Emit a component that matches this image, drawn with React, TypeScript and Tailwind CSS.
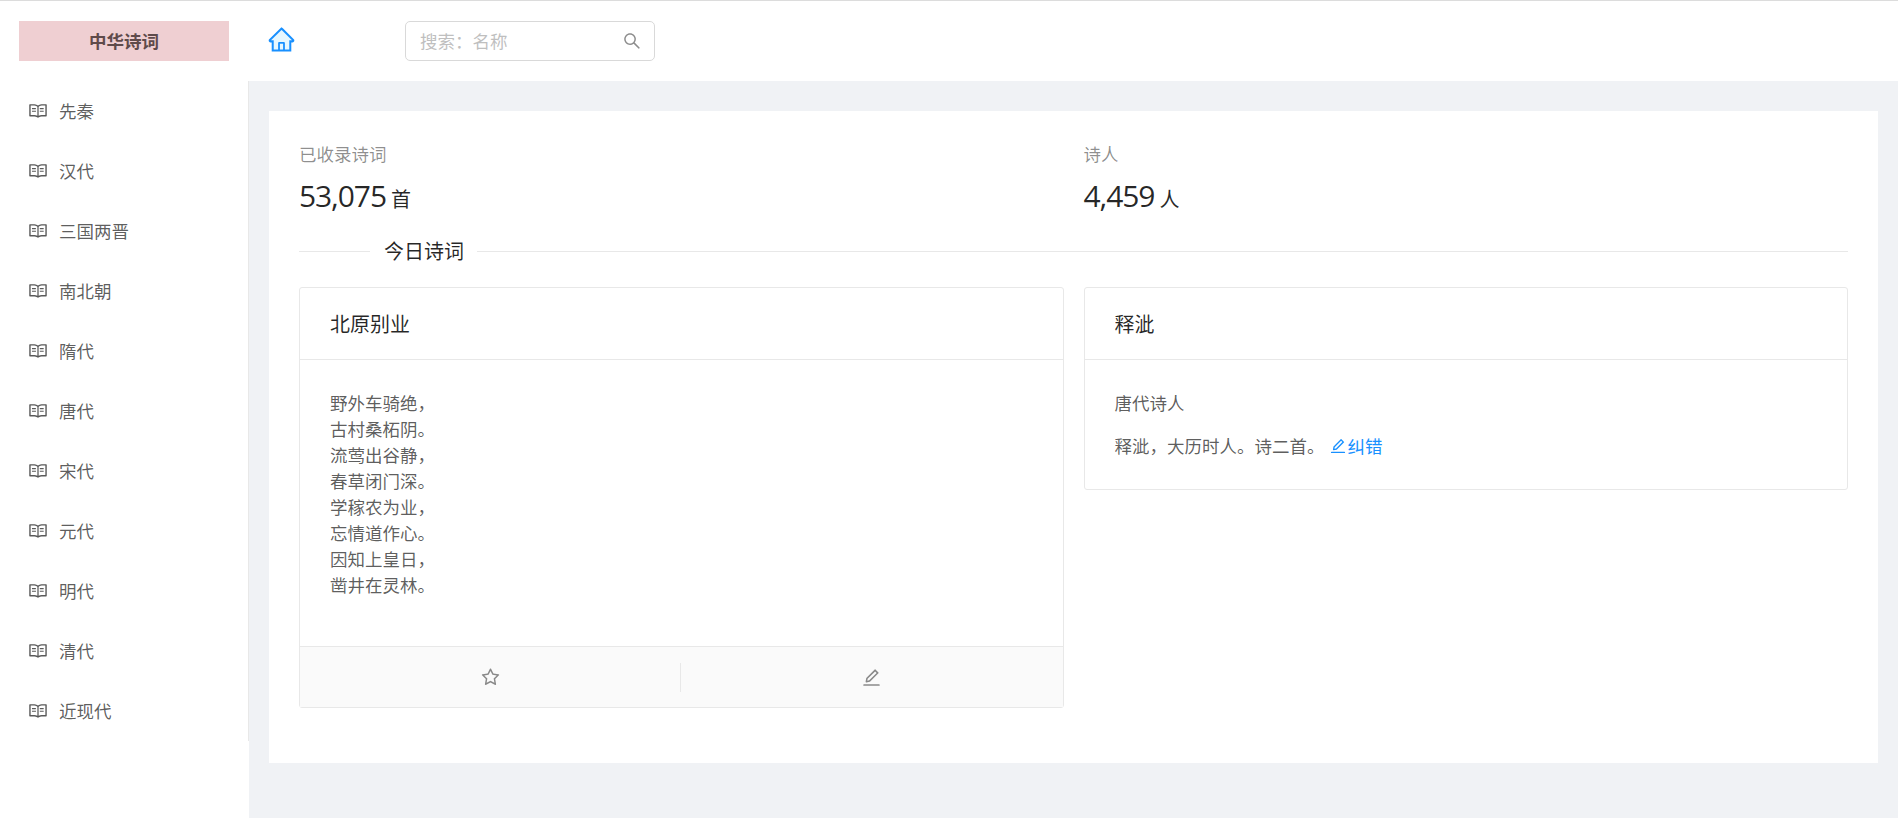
const READ = "M928 161H699.2c-49.1 0-97.1 14.1-138.4 40.7L512 233l-48.8-31.3A255.2 255.2 0 00324.8 161H96c-17.7 0-32 14.3-32 32v568c0 17.7 14.3 32 32 32h228.8c49.1 0 97.1 14.1 138.4 40.7l44.4 28.6c1.3.8 2.8 1.3 4.3 1.3s3-.4 4.3-1.3l44.4-28.6C602 807.1 650.1 793 699.2 793H928c17.7 0 32-14.3 32-32V193c0-17.7-14.3-32-32-32zM324.8 721H136V233h188.8c35.4 0 69.8 10.1 99.5 29.2l48.8 31.3 6.9 4.5v462c-47.6-25.6-100.8-39-155.2-39zm563.2 0H699.2c-54.4 0-107.6 13.4-155.2 39V298l6.9-4.5 48.8-31.3c29.7-19.1 64.1-29.2 99.5-29.2H888v488zM396.9 361H211.1c-3.9 0-7.1 3.4-7.1 7.5v45c0 4.1 3.2 7.5 7.1 7.5h185.7c3.9 0 7.1-3.4 7.1-7.5v-45c.1-4.1-3.1-7.5-7-7.5zm4 135H211.1c-3.9 0-7.1 3.4-7.1 7.5v45c0 4.1 3.2 7.5 7.1 7.5h189.7c3.9 0 7.1-3.4 7.1-7.5v-45c.1-4.1-3.1-7.5-7-7.5zM604 368.5v45c0 4.1 3.2 7.5 7.1 7.5h185.7c3.9 0 7.1-3.4 7.1-7.5v-45c.1-4.1-3.1-7.5-7-7.5H611.1c-3.9 0-7.1 3.4-7.1 7.5zm0 135v45c0 4.1 3.2 7.5 7.1 7.5h185.7c3.9 0 7.1-3.4 7.1-7.5v-45c.1-4.1-3.1-7.5-7-7.5H611.1c-3.9 0-7.1 3.4-7.1 7.5z";
const EDIT = "M257.7 752c2 0 4-.2 6-.5L431.9 722c2-.4 3.9-1.3 5.3-2.8l423.9-423.9a9.96 9.96 0 000-14.1L694.9 114.9c-1.9-1.9-4.4-2.9-7.1-2.9s-5.2 1-7.1 2.9L256.8 538.8c-1.5 1.5-2.4 3.3-2.8 5.3l-29.5 168.2a33.5 33.5 0 009.4 29.8c6.6 6.4 14.9 9.9 23.8 9.9zm67.4-174.4L687.8 215l73.3 73.3-362.7 362.6-88.9 15.7 15.6-89zM880 836H144c-17.7 0-32 14.3-32 32v36c0 4.4 3.6 8 8 8h784c4.4 0 8-3.6 8-8v-36c0-17.7-14.3-32-32-32z";
const STAR = "M908.1 353.1l-253.9-36.9L540.7 86.1c-3.1-6.3-8.2-11.4-14.5-14.5-15.8-7.8-35-1.3-42.9 14.5L369.8 316.2l-253.9 36.9c-7 1-13.4 4.3-18.3 9.3a32.05 32.05 0 00.6 45.3l183.7 179.1-43.4 252.9a31.95 31.95 0 0046.4 33.7L512 754l227.1 119.4c6.2 3.3 13.4 4.4 20.3 3.2 17.4-3 29.1-19.5 26.1-36.9l-43.4-252.9 183.7-179.1c5-4.9 8.3-11.3 9.3-18.3 2.7-17.5-9.5-33.7-27-36.3zM664.8 561.6l36.1 210.3L512 672.7 323.1 772l36.1-210.3-152.8-149L417.6 382 512 190.7 606.4 382l211.2 30.7-152.8 148.9z";
const SEARCH = "M909.6 854.5L649.9 594.8C690.2 542.7 712 479 712 412c0-80.2-31.3-155.4-87.9-212.1-56.6-56.7-132-87.9-212.1-87.9s-155.5 31.3-212.1 87.9C143.2 256.5 112 331.8 112 412c0 80.1 31.3 155.5 87.9 212.1C256.5 680.8 331.8 712 412 712c67 0 130.6-21.8 182.7-62l259.7 259.6a8.2 8.2 0 0011.6 0l43.6-43.5a8.2 8.2 0 000-11.6zM570.4 570.4C528 612.7 471.8 636 412 636s-116-23.3-158.4-65.6C211.3 528 188 471.8 188 412s23.3-116.1 65.6-158.4C296 211.3 352.2 188 412 188s116.1 23.2 158.4 65.6S636 352.2 636 412s-23.3 116.1-65.6 158.4z";
const HOME = "M946.5 505L560.1 118.8l-25.9-25.9a31.5 31.5 0 00-44.4 0L77.5 505a63.9 63.9 0 00-18.8 46c.4 35.2 29.7 63.3 64.9 63.3h42.5V940h691.8V614.3h43.4c17.1 0 33.2-6.7 45.3-18.8a63.6 63.6 0 0018.7-45.3c0-17-6.7-33.1-18.8-45.2zM568 868H456V664h112v204zm217.9-325.7V868H632V640c0-22.1-17.9-40-40-40H432c-22.1 0-40 17.9-40 40v228H238.1V542.3h-96l370-369.7 23.1 23.1L882 542.3h-96.1z";
const HOME_FILL = "M512.1 172.6l-370 369.7h96V868H392V640c0-22.1 17.9-40 40-40h160c22.1 0 40 17.9 40 40v228h153.9V542.3H882L535.2 195.7l-23.1-23.1zM456 664h112v204H456z";

const DYNASTIES = ["先秦", "汉代", "三国两晋", "南北朝", "隋代", "唐代", "宋代", "元代", "明代", "清代", "近现代"];
const POEM = ["野外车骑绝，", "古村桑柘阴。", "流莺出谷静，", "春草闭门深。", "学稼农为业，", "忘情道作心。", "因知上皇日，", "凿井在灵林。"];

function Icon({ d, className }: { d: string; className: string }) {
  return (
    <svg viewBox="0 0 1024 1024" fill="currentColor" className={className}>
      <path d={d} />
    </svg>
  );
}

function Stat({ label, value, unit }: { label: string; value: string; unit: string }) {
  return (
    <div>
      <div className="h-[26px] leading-[26px] text-black/45">{label}</div>
      <div className="mt-[9px] h-[40px] leading-[40px] text-black/85">
        <span className="text-[30px] tracking-[-1.1px] font-['Open_Sans',sans-serif]">{value}</span>
        <span className="ml-[5px] text-[20px]">{unit}</span>
      </div>
    </div>
  );
}

function Sidebar() {
  return (
    <aside className="w-[249px] shrink-0 bg-white">
      <div className="h-[80px] pt-[20px] pl-[19px]">
        <div className="w-[210px] h-[40px] bg-[#efcfd2] flex items-center justify-center font-bold text-[#5f4b4b]">
          中华诗词
        </div>
      </div>
      {/* 菜单 */}
      <nav className="border-r border-[#e8e8e8]">
        {DYNASTIES.map((name) => (
          <div key={name} className="h-[60px] flex items-center pl-[28px] text-black/65">
            <Icon d={READ} className="w-[20px] h-[20px] mr-[11px]" />
            {name}
          </div>
        ))}
      </nav>
    </aside>
  );
}

function Header() {
  return (
    <header className="h-[80px] bg-white flex items-start">
      <svg viewBox="0 0 1024 1024" className="ml-[18px] mt-[24px] w-[29px] h-[29px] text-[#1890ff]">
        <path d={HOME_FILL} fill="#e6f7ff" />
        <path d={HOME} fill="currentColor" />
      </svg>
      <div className="ml-[109px] mt-[20px] w-[250px] h-[40px] border border-[#d9d9d9] rounded-[5px] flex items-center justify-between pl-[14px] pr-[12px]">
        <span className="text-[#bfbfbf]">搜索：名称</span>
        <Icon d={SEARCH} className="w-[20px] h-[20px] text-black/45" />
      </div>
    </header>
  );
}

function PoemCard() {
  return (
    <div className="border border-[#e8e8e8] rounded-[3px] h-[421px] flex flex-col">
      <div className="h-[72px] shrink-0 border-b border-[#e8e8e8] pl-[30px] flex items-center text-[20px] text-black/85">
        北原别业
      </div>
      <div className="flex-1 pt-[30px] pl-[30px] text-black/65 leading-[26px]">
        {POEM.map((line) => (
          <div key={line}>{line}</div>
        ))}
      </div>
      <div className="h-[61px] shrink-0 border-t border-[#e8e8e8] bg-[#fafafa] flex items-center text-black/45">
        <div className="w-[381px] h-[29px] border-r border-[#e8e8e8] flex items-center justify-center">
          <Icon d={STAR} className="w-[21px] h-[21px]" />
        </div>
        <div className="flex-1 h-[29px] flex items-center justify-center">
          <Icon d={EDIT} className="w-[21px] h-[21px]" />
        </div>
      </div>
    </div>
  );
}

function PoetCard() {
  return (
    <div className="border border-[#e8e8e8] rounded-[3px] h-[203px]">
      <div className="h-[72px] border-b border-[#e8e8e8] pl-[30px] flex items-center text-[20px] text-black/85">
        释泚
      </div>
      <div className="pt-[30px] pl-[30px] text-black/65 leading-[26px]">
        <div>唐代诗人</div>
        <div className="mt-[17px] flex items-center">
          释泚，大历时人。诗二首。
          <span className="ml-[4px] text-[#1890ff] flex items-center">
            <Icon d={EDIT} className="w-[18px] h-[18px] mr-px" />
            纠错
          </span>
        </div>
      </div>
    </div>
  );
}

export default function App() {
  return (
    <div className="h-[818px] overflow-hidden border-t border-[#dcdcdc] flex bg-[#f0f2f5] text-[17.5px] font-['Noto_Sans_CJK_SC','Noto_Sans',sans-serif]">
      <Sidebar />
      <main className="flex-1 min-w-0">
        <Header />
        <div className="pt-[30px] px-[20px]">
          <section className="h-[652px] bg-white pt-[30px] px-[30px]">
            {/* 统计 */}
            <div className="grid grid-cols-2 gap-x-[20px]">
              <Stat label="已收录诗词" value="53,075" unit="首" />
              <Stat label="诗人" value="4,459" unit="人" />
            </div>
            {/* 今日诗词 */}
            <div className="mt-[20px] h-[30px] flex items-center text-[20px] text-black/85">
              <div className="w-[71px] h-px bg-[#e8e8e8]" />
              <span className="pl-[14px] pr-[13px] leading-[30px]">今日诗词</span>
              <div className="flex-1 h-px bg-[#e8e8e8]" />
            </div>
            <div className="mt-[21px] grid grid-cols-2 gap-x-[20px] items-start">
              <PoemCard />
              <PoetCard />
            </div>
          </section>
        </div>
      </main>
    </div>
  );
}
